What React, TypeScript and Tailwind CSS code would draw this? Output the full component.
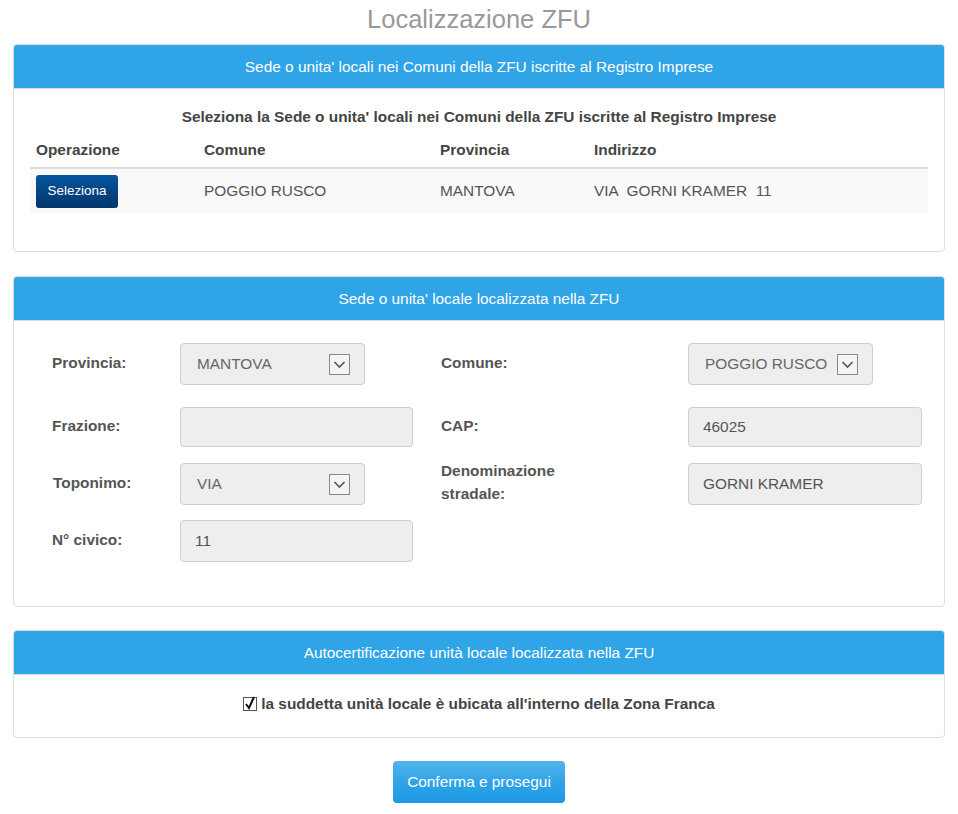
import React from "react";

function Chevron() {
  return (
    <span className="flex h-[21px] w-[21px] items-center justify-center border border-[#8a8a8a] bg-[#f4f4f4]">
      <svg width="15" height="15" viewBox="0 0 15 15">
        <path d="M2.5 5 L7.5 10 L12.5 5" fill="none" stroke="#4b5563" strokeWidth="1.6" />
      </svg>
    </span>
  );
}

function SelectBox({ value, w }: { value: string; w: string }) {
  return (
    <div className={`flex h-[42px] items-center justify-between rounded-[4px] border border-[#cfcfcf] bg-[#eeeeee] pl-[16px] pr-[14px] text-[15.4px] text-[#666] ${w}`}>
      <span>{value}</span>
      <Chevron />
    </div>
  );
}

function InputBox({ value, h = "h-[41px]" }: { value: string; h?: string }) {
  return (
    <div className={`flex w-full items-center rounded-[4px] border border-[#cfcfcf] bg-[#eeeeee] pl-[14px] text-[15.4px] text-[#555] ${h}`}>
      {value}
    </div>
  );
}

function Panel({ title, children }: { title: string; children: React.ReactNode }) {
  return (
    <div className="overflow-hidden rounded-[4px] border border-[#dddddd] bg-white">
      <div className="flex h-[44px] items-center justify-center border-b border-[#dddddd] bg-[#2fa4e7] text-[15.4px] text-white">
        {title}
      </div>
      {children}
    </div>
  );
}

function Label({ children }: { children: React.ReactNode }) {
  return <div className="pb-[4px] text-[15.4px] font-bold leading-[23px] text-[#555]">{children}</div>;
}

const cols = "grid grid-cols-[128px_233px_28px_247px_234px] items-center";

export default function App() {
  return (
    <div className="min-h-[814px] bg-white px-[13px]" style={{ fontFamily: "'Liberation Sans', Arial, sans-serif" }}>
      <h1 className="pt-[5px] pb-[10px] text-center text-[25.5px] leading-[29px] text-[#999]">Localizzazione ZFU</h1>

      <Panel title="Sede o unita' locali nei Comuni della ZFU iscritte al Registro Imprese">
        <div className="px-[16px] pt-[17px] pb-[38px]">
          <div className="text-center text-[15.4px] font-bold leading-[22px] text-[#444]">
            Seleziona la Sede o unita' locali nei Comuni della ZFU iscritte al Registro Imprese
          </div>
          <div className="grid grid-cols-[168px_236px_154px_1fr] border-b-2 border-[#dddddd] pt-[11px] pb-[6px] text-[15.4px] font-bold leading-[22px] text-[#444]">
            <div className="pl-[6px]">Operazione</div>
            <div className="pl-[6px]">Comune</div>
            <div className="pl-[6px]">Provincia</div>
            <div className="pl-[6px]">Indirizzo</div>
          </div>
          <div className="grid h-[44px] grid-cols-[168px_236px_154px_1fr] items-center bg-[#f9f9f9] text-[15.4px] text-[#555]">
            <div className="pl-[6px]">
              <button className="flex h-[33px] w-[82px] items-center justify-center rounded-[3px] bg-gradient-to-b from-[#05559f] to-[#03366a] text-[13.4px] text-white">
                Seleziona
              </button>
            </div>
            <div className="pl-[6px]">POGGIO RUSCO</div>
            <div className="pl-[6px]">MANTOVA</div>
            <div className="pl-[6px] whitespace-pre">VIA  GORNI KRAMER  11</div>
          </div>
        </div>
      </Panel>

      <div className="h-[24px]" />

      <Panel title="Sede o unita' locale localizzata nella ZFU">
        <div className="pl-[38px] pt-[22px] pb-[44px]">
          <div className={`${cols} grid-rows-[42px]`}>
            <Label>Provincia:</Label>
            <SelectBox value="MANTOVA" w="w-[185px]" />
            <div />
            <Label>Comune:</Label>
            <SelectBox value="POGGIO RUSCO" w="w-[185px]" />
          </div>
          <div className={`mt-[22px] ${cols} grid-rows-[40px]`}>
            <Label>Frazione:</Label>
            <InputBox value="" h="h-[40px]" />
            <div />
            <Label>CAP:</Label>
            <InputBox value="46025" h="h-[40px]" />
          </div>
          <div className={`mt-[16px] ${cols} grid-rows-[42px]`}>
            <Label>
              <span className="pl-[1px]">Toponimo:</span>
            </Label>
            <SelectBox value="VIA" w="w-[185px]" />
            <div />
            <Label>
              Denominazione
              <br />
              stradale:
            </Label>
            <InputBox value="GORNI KRAMER" h="h-[42px]" />
          </div>
          <div className={`mt-[15px] ${cols} grid-rows-[42px]`}>
            <Label>N° civico:</Label>
            <InputBox value="11" h="h-[42px]" />
          </div>
        </div>
      </Panel>

      <div className="h-[23px]" />

      <Panel title="Autocertificazione unità locale localizzata nella ZFU">
        <div className="flex items-center justify-center gap-[4px] pt-[18px] pb-[22px] text-[15.4px] font-bold leading-[22px] text-[#444]">
          <svg width="14" height="16" viewBox="0 0 14 16" className="-mt-[3px]">
            <rect x="0.5" y="2.5" width="13" height="13" fill="#fff" stroke="#555" />
            <path d="M3 9 L6 13 L11 2" fill="none" stroke="#111" strokeWidth="2" />
          </svg>
          <span>la suddetta unità locale è ubicata all'interno della Zona Franca</span>
        </div>
      </Panel>

      <div className="flex justify-center pt-[23px]">
        <button className="flex h-[42px] w-[172px] items-center justify-center rounded-[4px] bg-gradient-to-b from-[#52b3ea] via-[#2fa4e7] to-[#1b9ae3] text-[15.4px] text-white">
          Conferma e prosegui
        </button>
      </div>
    </div>
  );
}
